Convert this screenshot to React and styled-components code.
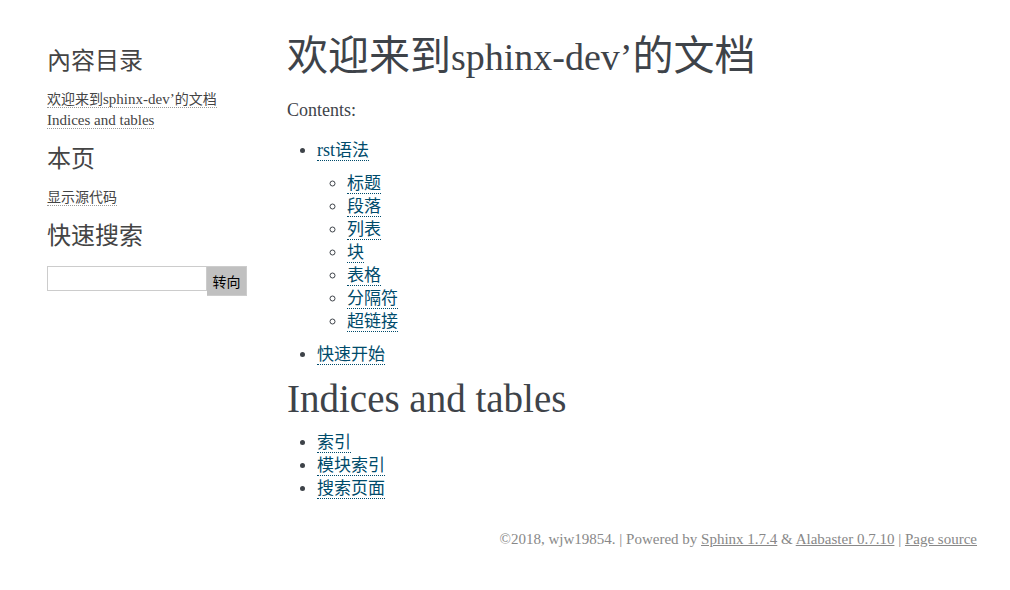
import React from "react";
import styled, { createGlobalStyle } from "styled-components";

const serif = `"Liberation Serif", "Noto Sans CJK SC", serif`;

const GlobalStyle = createGlobalStyle`
  *, *::before, *::after { box-sizing: border-box; }
  body {
    margin: 0;
    background: #fff;
    color: #3e4349;
    font: 17px/23px ${serif};
  }
`;

const Page = styled.div`
  padding: 30px 33px 30px 37px;
`;

const Columns = styled.div`
  display: grid;
  grid-template-columns: 220px minmax(0, 1fr);
`;

const Sidebar = styled.aside`
  padding: 16px 10px 0;
  color: #444;
  font-size: 14px;
  line-height: 21px;
`;

const SidebarSection = styled.section`
  margin-bottom: 13px;
`;

const SidebarTitle = styled.h3`
  margin: 0 0 13px;
  font-size: 24px;
  line-height: 30px;
  font-weight: 400;
`;

const SidebarList = styled.ul`
  margin: 0;
  padding: 0;
  list-style: none;
`;

const SidebarLink = styled.a`
  color: #444;
  text-decoration: none;
  border-bottom: 1px dotted #999;
`;

const Latin = styled.span`
  font-size: ${({ $size }) => $size}px;
`;

const SearchForm = styled.form`
  display: flex;
  align-items: flex-start;
  padding-top: 2px;
`;

const SearchInput = styled.input`
  flex: 1;
  min-width: 0;
  height: 25px;
  padding: 2px 4px;
  border: 1px solid #ccc;
  border-radius: 0;
  background: #fff;
  font: 14px ${serif};
`;

const SearchButton = styled.button`
  width: 40px;
  height: 30px;
  padding: 0;
  border: 1px solid #ccc;
  border-left: 0;
  border-radius: 0;
  background: #c0c0c0;
  color: #000;
  font: 14px ${serif};
`;

const Body = styled.main`
  padding: 0 30px;
`;

const Title = styled.h1`
  margin: 0;
  font-size: ${({ $size }) => $size}px;
  line-height: ${({ $line }) => $line}px;
  font-weight: 400;
`;

const Intro = styled.p`
  margin: 15px 0 17px;
  font-size: 18px;
`;

const List = styled.ul`
  margin: ${({ $gap }) => $gap}px 0;
  padding-left: 30px;
  list-style-type: ${({ $marker }) => $marker || "disc"};
`;

const DocLink = styled.a`
  color: #004b6b;
  text-decoration: none;
  border-bottom: 1px dotted #004b6b;
`;

const Footer = styled.footer`
  margin-top: 29px;
  color: #888;
  font-size: 15px;
  line-height: 21px;
  text-align: right;
`;

const FooterLink = styled.a`
  color: #888;
  text-decoration: underline;
`;

const topics = ["标题", "段落", "列表", "块", "表格", "分隔符", "超链接"];
const indices = ["索引", "模块索引", "搜索页面"];

export default function App() {
  return (
    <Page>
      <GlobalStyle />
      <Columns>
        <Sidebar>
          <SidebarSection>
            <SidebarTitle>內容目录</SidebarTitle>
            <SidebarList>
              <li>
                <SidebarLink href="#welcome">
                  欢迎来到<Latin $size={15}>sphinx-dev’</Latin>的文档
                </SidebarLink>
              </li>
              <li>
                <SidebarLink href="#indices">
                  <Latin $size={15}>Indices and tables</Latin>
                </SidebarLink>
              </li>
            </SidebarList>
          </SidebarSection>
          <SidebarSection>
            <SidebarTitle>本页</SidebarTitle>
            <SidebarList>
              <li><SidebarLink href="#source">显示源代码</SidebarLink></li>
            </SidebarList>
          </SidebarSection>
          <section>
            <SidebarTitle id="search-title">快速搜索</SidebarTitle>
            <SearchForm onSubmit={(e) => e.preventDefault()}>
              <SearchInput type="text" name="q" aria-labelledby="search-title" />
              <SearchButton type="submit">转向</SearchButton>
            </SearchForm>
          </section>
        </Sidebar>
        <Body>
          <Title id="welcome" $size={41} $line={53}>
            欢迎来到<Latin $size={38}>sphinx-dev’</Latin>的文档
          </Title>
          <Intro>Contents:</Intro>
          <List $gap={0}>
            <li>
              <DocLink href="#rst"><Latin $size={18}>rst</Latin>语法</DocLink>
              <List $gap={10} $marker="circle">
                {topics.map((t) => (
                  <li key={t}><DocLink href={`#${t}`}>{t}</DocLink></li>
                ))}
              </List>
            </li>
            <li><DocLink href="#start">快速开始</DocLink></li>
          </List>
          <Title as="h2" id="indices" $size={39} $line={65}>Indices and tables</Title>
          <List $gap={0}>
            {indices.map((t) => (
              <li key={t}><DocLink href={`#${t}`}>{t}</DocLink></li>
            ))}
          </List>
        </Body>
      </Columns>
      <Footer>
        ©2018, wjw19854. | Powered by <FooterLink href="#sphinx">Sphinx 1.7.4</FooterLink> &amp;{" "}
        <FooterLink href="#alabaster">Alabaster 0.7.10</FooterLink> |{" "}
        <FooterLink href="#page-source">Page source</FooterLink>
      </Footer>
    </Page>
  );
}
